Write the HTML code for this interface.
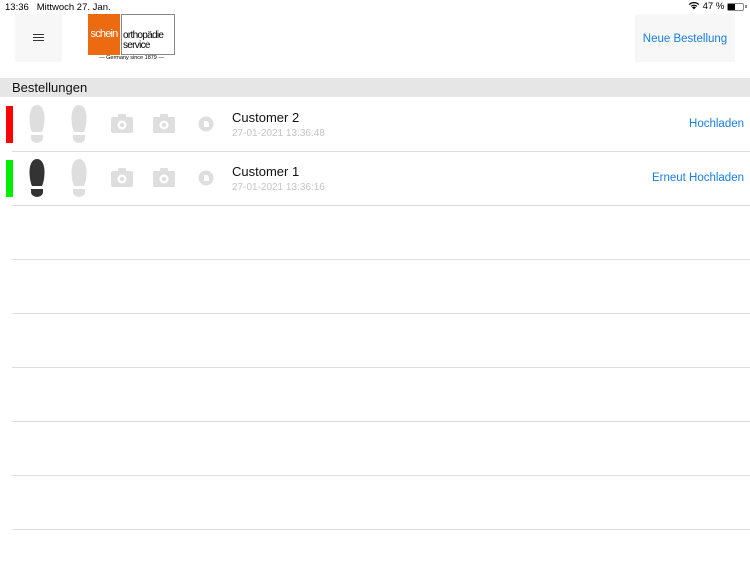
<!DOCTYPE html>
<html><head><meta charset="utf-8"><style>
*{margin:0;padding:0;box-sizing:border-box}
body{width:750px;height:562px;background:#fff;font-family:"Liberation Sans",sans-serif;position:relative;overflow:hidden;color:#000}
.a{position:absolute}
.line{position:absolute;left:12px;right:0;height:1px;background:#ddd}
.name{font-size:13px;color:#111}
.date{font-size:10px;color:#c4c4c4}
.link{font-size:11.5px;color:#1a7ee0}
</style></head><body>
<div class="a" style="left:5px;top:2px;font-size:9.5px">13:36&nbsp;&nbsp; Mittwoch 27. Jan.</div>
<div class="a" style="left:688px;top:1px;font-size:9.5px">
<svg width="12" height="9" viewBox="0 0 12 9" style="vertical-align:-1px"><path d="M6 8.5 L8 6.3 A3 3 0 0 0 4 6.3Z M2.6 4.9 A5 5 0 0 1 9.4 4.9 L8.6 5.7 A4 4 0 0 0 3.4 5.7Z M0.8 3.1 A7.6 7.6 0 0 1 11.2 3.1 L10.3 4 A6.3 6.3 0 0 0 1.7 4Z" fill="#000"/></svg> 47 %</div>
<div class="a" style="left:727px;top:3px;width:17px;height:8px;border:1px solid #888;border-radius:2px"><div style="width:7px;height:6px;background:#000"></div></div>
<div class="a" style="left:745px;top:5px;width:1.5px;height:3px;background:#888"></div>

<div class="a" style="left:15px;top:14px;width:47px;height:48px;background:#f7f7f7"></div>
<div class="a" style="left:33px;top:34px;width:11px;height:1.3px;background:#333;box-shadow:0 3px 0 #333,0 6px 0 #333"></div>

<div class="a" style="left:88px;top:14px;width:32px;height:41px;background:#ec6a10;color:#fff;font-size:11px;line-height:41px;text-align:center;letter-spacing:-0.8px">schein</div>
<div class="a" style="left:121px;top:14px;width:54px;height:41px;border:1px solid #888;font-size:10px;line-height:9.5px;padding-top:16px;padding-left:1px;letter-spacing:-0.7px">orthopädie<br>service</div>
<div class="a" style="left:88px;top:54px;width:87px;font-size:5.5px;text-align:center;line-height:8px">— Germany since 1879 —</div>

<div class="a" style="left:635px;top:14px;width:100px;height:48px;background:#f7f7f7;text-align:center;line-height:48px" ><span class="link">Neue Bestellung</span></div>

<div class="a" style="left:0;top:78px;width:750px;height:19px;background:#e6e6e6"></div>
<div class="a" style="left:12px;top:80px;font-size:13px;color:#111">Bestellungen</div>

<div class="a" style="left:6px;top:106px;width:7px;height:37px;background:#f00"></div>
<div class="a" style="left:6px;top:160px;width:7px;height:37px;background:#0e0"></div>

<svg class="a" style="left:0;top:97px" width="230" height="110" viewBox="0 0 230 110">
<defs>
<g id="shoe"><path d="M0 0 C5 0 7.5 6 7.5 13 C7.5 20 6 25 5 27 L-5 27 C-6 25 -7.5 20 -7.5 13 C-7.5 6 -5 0 0 0Z"/><path d="M-6 30 h12 v3 a6 5 0 0 1 -12 0z"/></g>
<g id="cam"><rect x="-11" y="-7" width="22" height="16" rx="2"/><rect x="-4" y="-10" width="8" height="4" rx="1"/><circle cx="0" cy="1" r="4.5" fill="#fff"/><circle cx="0" cy="1" r="2.2"/></g>
<g id="clk"><circle r="7.5"/><path d="M-2 -3 h3 l2 2 v4 h-5z" fill="#fff"/></g>
</defs>
<g fill="#dedede">
<use href="#shoe" x="37" y="8"/><use href="#shoe" x="79" y="8"/>
<use href="#cam" x="122" y="27"/><use href="#cam" x="164" y="27"/><use href="#clk" x="206" y="27"/>
<use href="#shoe" x="37" y="62" fill="#333"/><use href="#shoe" x="79" y="62"/>
<use href="#cam" x="122" y="81"/><use href="#cam" x="164" y="81"/><use href="#clk" x="206" y="81"/>
</g>
</svg>

<div class="a name" style="left:232px;top:110px">Customer 2</div>
<div class="a date" style="left:232px;top:128px">27-01-2021 13:36:48</div>
<div class="a link" style="right:6px;top:118px">Hochladen</div>
<div class="a name" style="left:232px;top:164px">Customer 1</div>
<div class="a date" style="left:232px;top:182px">27-01-2021 13:36:16</div>
<div class="a link" style="right:6px;top:172px">Erneut Hochladen</div>

<div class="line" style="top:151px"></div>
<div class="line" style="top:205px"></div>
<div class="line" style="top:259px"></div>
<div class="line" style="top:313px"></div>
<div class="line" style="top:367px"></div>
<div class="line" style="top:421px"></div>
<div class="line" style="top:475px"></div>
<div class="line" style="top:529px"></div>
</body></html>
